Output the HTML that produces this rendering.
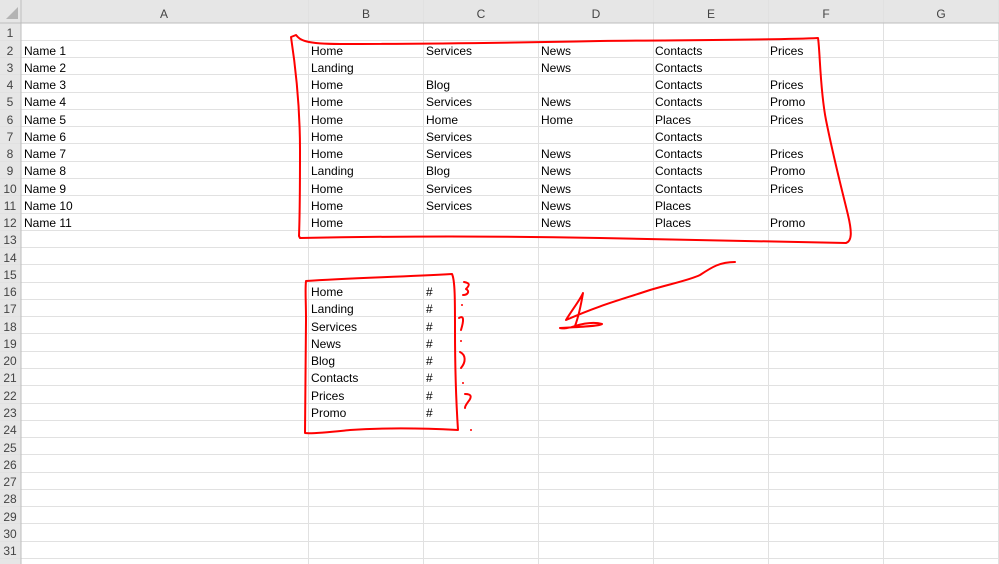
<!DOCTYPE html><html><head><style>body{margin:0;background:#fff}svg{display:block;font-family:"Liberation Sans",sans-serif}</style></head><body>
<svg width="999" height="564" xmlns="http://www.w3.org/2000/svg">
<rect x="0" y="0" width="999" height="23" fill="#e6e6e6"/>
<rect x="0" y="0" width="21" height="564" fill="#e6e6e6"/>
<polygon points="6,19 18,19 18,7" fill="#b4b4b4"/>
<g stroke="#e1e1e1" stroke-width="1">
<line x1="308.5" y1="0" x2="308.5" y2="564"/><line x1="423.5" y1="0" x2="423.5" y2="564"/><line x1="538.5" y1="0" x2="538.5" y2="564"/><line x1="653.5" y1="0" x2="653.5" y2="564"/><line x1="768.5" y1="0" x2="768.5" y2="564"/><line x1="883.5" y1="0" x2="883.5" y2="564"/><line x1="998.5" y1="0" x2="998.5" y2="564"/>
<line x1="0" y1="40.5" x2="999" y2="40.5"/><line x1="0" y1="57.5" x2="999" y2="57.5"/><line x1="0" y1="74.5" x2="999" y2="74.5"/><line x1="0" y1="92.5" x2="999" y2="92.5"/><line x1="0" y1="109.5" x2="999" y2="109.5"/><line x1="0" y1="126.5" x2="999" y2="126.5"/><line x1="0" y1="143.5" x2="999" y2="143.5"/><line x1="0" y1="161.5" x2="999" y2="161.5"/><line x1="0" y1="178.5" x2="999" y2="178.5"/><line x1="0" y1="195.5" x2="999" y2="195.5"/><line x1="0" y1="213.5" x2="999" y2="213.5"/><line x1="0" y1="230.5" x2="999" y2="230.5"/><line x1="0" y1="247.5" x2="999" y2="247.5"/><line x1="0" y1="264.5" x2="999" y2="264.5"/><line x1="0" y1="282.5" x2="999" y2="282.5"/><line x1="0" y1="299.5" x2="999" y2="299.5"/><line x1="0" y1="316.5" x2="999" y2="316.5"/><line x1="0" y1="333.5" x2="999" y2="333.5"/><line x1="0" y1="351.5" x2="999" y2="351.5"/><line x1="0" y1="368.5" x2="999" y2="368.5"/><line x1="0" y1="385.5" x2="999" y2="385.5"/><line x1="0" y1="403.5" x2="999" y2="403.5"/><line x1="0" y1="420.5" x2="999" y2="420.5"/><line x1="0" y1="437.5" x2="999" y2="437.5"/><line x1="0" y1="454.5" x2="999" y2="454.5"/><line x1="0" y1="472.5" x2="999" y2="472.5"/><line x1="0" y1="489.5" x2="999" y2="489.5"/><line x1="0" y1="506.5" x2="999" y2="506.5"/><line x1="0" y1="523.5" x2="999" y2="523.5"/><line x1="0" y1="541.5" x2="999" y2="541.5"/><line x1="0" y1="558.5" x2="999" y2="558.5"/>
</g>
<line x1="0" y1="23" x2="999" y2="23" stroke="#bdbdbd"/>
<line x1="21" y1="0" x2="21" y2="564" stroke="#bdbdbd"/>
<g font-size="12" fill="#444" text-anchor="middle" transform="translate(0,1)">
<text x="164" y="17">A</text><text x="366" y="17">B</text><text x="481" y="17">C</text><text x="596" y="17">D</text><text x="711" y="17">E</text><text x="826" y="17">F</text><text x="941" y="17">G</text>
<text x="10" y="36">1</text><text x="10" y="54">2</text><text x="10" y="71">3</text><text x="10" y="88">4</text><text x="10" y="105">5</text><text x="10" y="123">6</text><text x="10" y="140">7</text><text x="10" y="157">8</text><text x="10" y="174">9</text><text x="10" y="192">10</text><text x="10" y="209">11</text><text x="10" y="226">12</text><text x="10" y="243">13</text><text x="10" y="261">14</text><text x="10" y="278">15</text><text x="10" y="295">16</text><text x="10" y="312">17</text><text x="10" y="330">18</text><text x="10" y="347">19</text><text x="10" y="364">20</text><text x="10" y="381">21</text><text x="10" y="399">22</text><text x="10" y="416">23</text><text x="10" y="433">24</text><text x="10" y="451">25</text><text x="10" y="468">26</text><text x="10" y="485">27</text><text x="10" y="502">28</text><text x="10" y="520">29</text><text x="10" y="537">30</text><text x="10" y="554">31</text>
</g>
<g font-size="12" fill="#000" transform="translate(0,1)">
<text x="24" y="54">Name 1</text><text x="311" y="54">Home</text><text x="426" y="54">Services</text><text x="541" y="54">News</text><text x="655" y="54">Contacts</text><text x="770" y="54">Prices</text>
<text x="24" y="71">Name 2</text><text x="311" y="71">Landing</text><text x="541" y="71">News</text><text x="655" y="71">Contacts</text>
<text x="24" y="88">Name 3</text><text x="311" y="88">Home</text><text x="426" y="88">Blog</text><text x="655" y="88">Contacts</text><text x="770" y="88">Prices</text>
<text x="24" y="105">Name 4</text><text x="311" y="105">Home</text><text x="426" y="105">Services</text><text x="541" y="105">News</text><text x="655" y="105">Contacts</text><text x="770" y="105">Promo</text>
<text x="24" y="123">Name 5</text><text x="311" y="123">Home</text><text x="426" y="123">Home</text><text x="541" y="123">Home</text><text x="655" y="123">Places</text><text x="770" y="123">Prices</text>
<text x="24" y="140">Name 6</text><text x="311" y="140">Home</text><text x="426" y="140">Services</text><text x="655" y="140">Contacts</text>
<text x="24" y="157">Name 7</text><text x="311" y="157">Home</text><text x="426" y="157">Services</text><text x="541" y="157">News</text><text x="655" y="157">Contacts</text><text x="770" y="157">Prices</text>
<text x="24" y="174">Name 8</text><text x="311" y="174">Landing</text><text x="426" y="174">Blog</text><text x="541" y="174">News</text><text x="655" y="174">Contacts</text><text x="770" y="174">Promo</text>
<text x="24" y="192">Name 9</text><text x="311" y="192">Home</text><text x="426" y="192">Services</text><text x="541" y="192">News</text><text x="655" y="192">Contacts</text><text x="770" y="192">Prices</text>
<text x="24" y="209">Name 10</text><text x="311" y="209">Home</text><text x="426" y="209">Services</text><text x="541" y="209">News</text><text x="655" y="209">Places</text>
<text x="24" y="226">Name 11</text><text x="311" y="226">Home</text><text x="541" y="226">News</text><text x="655" y="226">Places</text><text x="770" y="226">Promo</text>
<text x="311" y="295">Home</text><text x="426" y="295">#</text>
<text x="311" y="312">Landing</text><text x="426" y="312">#</text>
<text x="311" y="330">Services</text><text x="426" y="330">#</text>
<text x="311" y="347">News</text><text x="426" y="347">#</text>
<text x="311" y="364">Blog</text><text x="426" y="364">#</text>
<text x="311" y="381">Contacts</text><text x="426" y="381">#</text>
<text x="311" y="399">Prices</text><text x="426" y="399">#</text>
<text x="311" y="416">Promo</text><text x="426" y="416">#</text>
</g>
<g fill="none" stroke="#f00" stroke-width="2" stroke-linecap="round" stroke-linejoin="round">
<path d="M291,37 L296,35 C300,40 305,44 340,44 C420,44 500,43 600,41 C700,40 780,40 818,38 C820,50 820,90 826,120 C834,160 842,190 848,215 C852,232 852,241 846,243 C800,242 700,240 600,238 C500,236 400,236 300,238 L299,236 C300,210 300,180 300,150 C300,110 296,70 291,37 Z"/>
<path d="M306,281 C350,278 400,277 452,274 C455,280 455,300 455,330 C455,370 456,400 458,430 C420,428 380,428 350,430 C330,432 312,434 305,433 C305,400 306,360 306,320 C306,300 305,290 306,281 Z"/>
<path d="M735,262 C720,262 712,267 700,275 C690,280 670,284 650,290 C620,300 600,305 566,320 C572,310 580,300 583,293 C581,305 578,318 575,326 C570,328 562,329 560,328 C580,327 600,326 602,324 C595,322 585,323 575,326"/>
<path d="M464,282 C470,283 470,285 466,289 C470,291 468,295 463,295"/>
<path d="M459,318 C464,315 464,320 461,330"/>
<path d="M460,352 C466,355 466,362 461,368"/>
<path d="M465,394 C472,394 472,397 468,402 C466,405 465,406 465,408"/>
</g>
<g fill="#f00"><circle cx="462" cy="305" r="1"/><circle cx="461" cy="341" r="1"/><circle cx="463" cy="383" r="1"/><circle cx="471" cy="430" r="1"/></g>
</svg>
</body></html>
